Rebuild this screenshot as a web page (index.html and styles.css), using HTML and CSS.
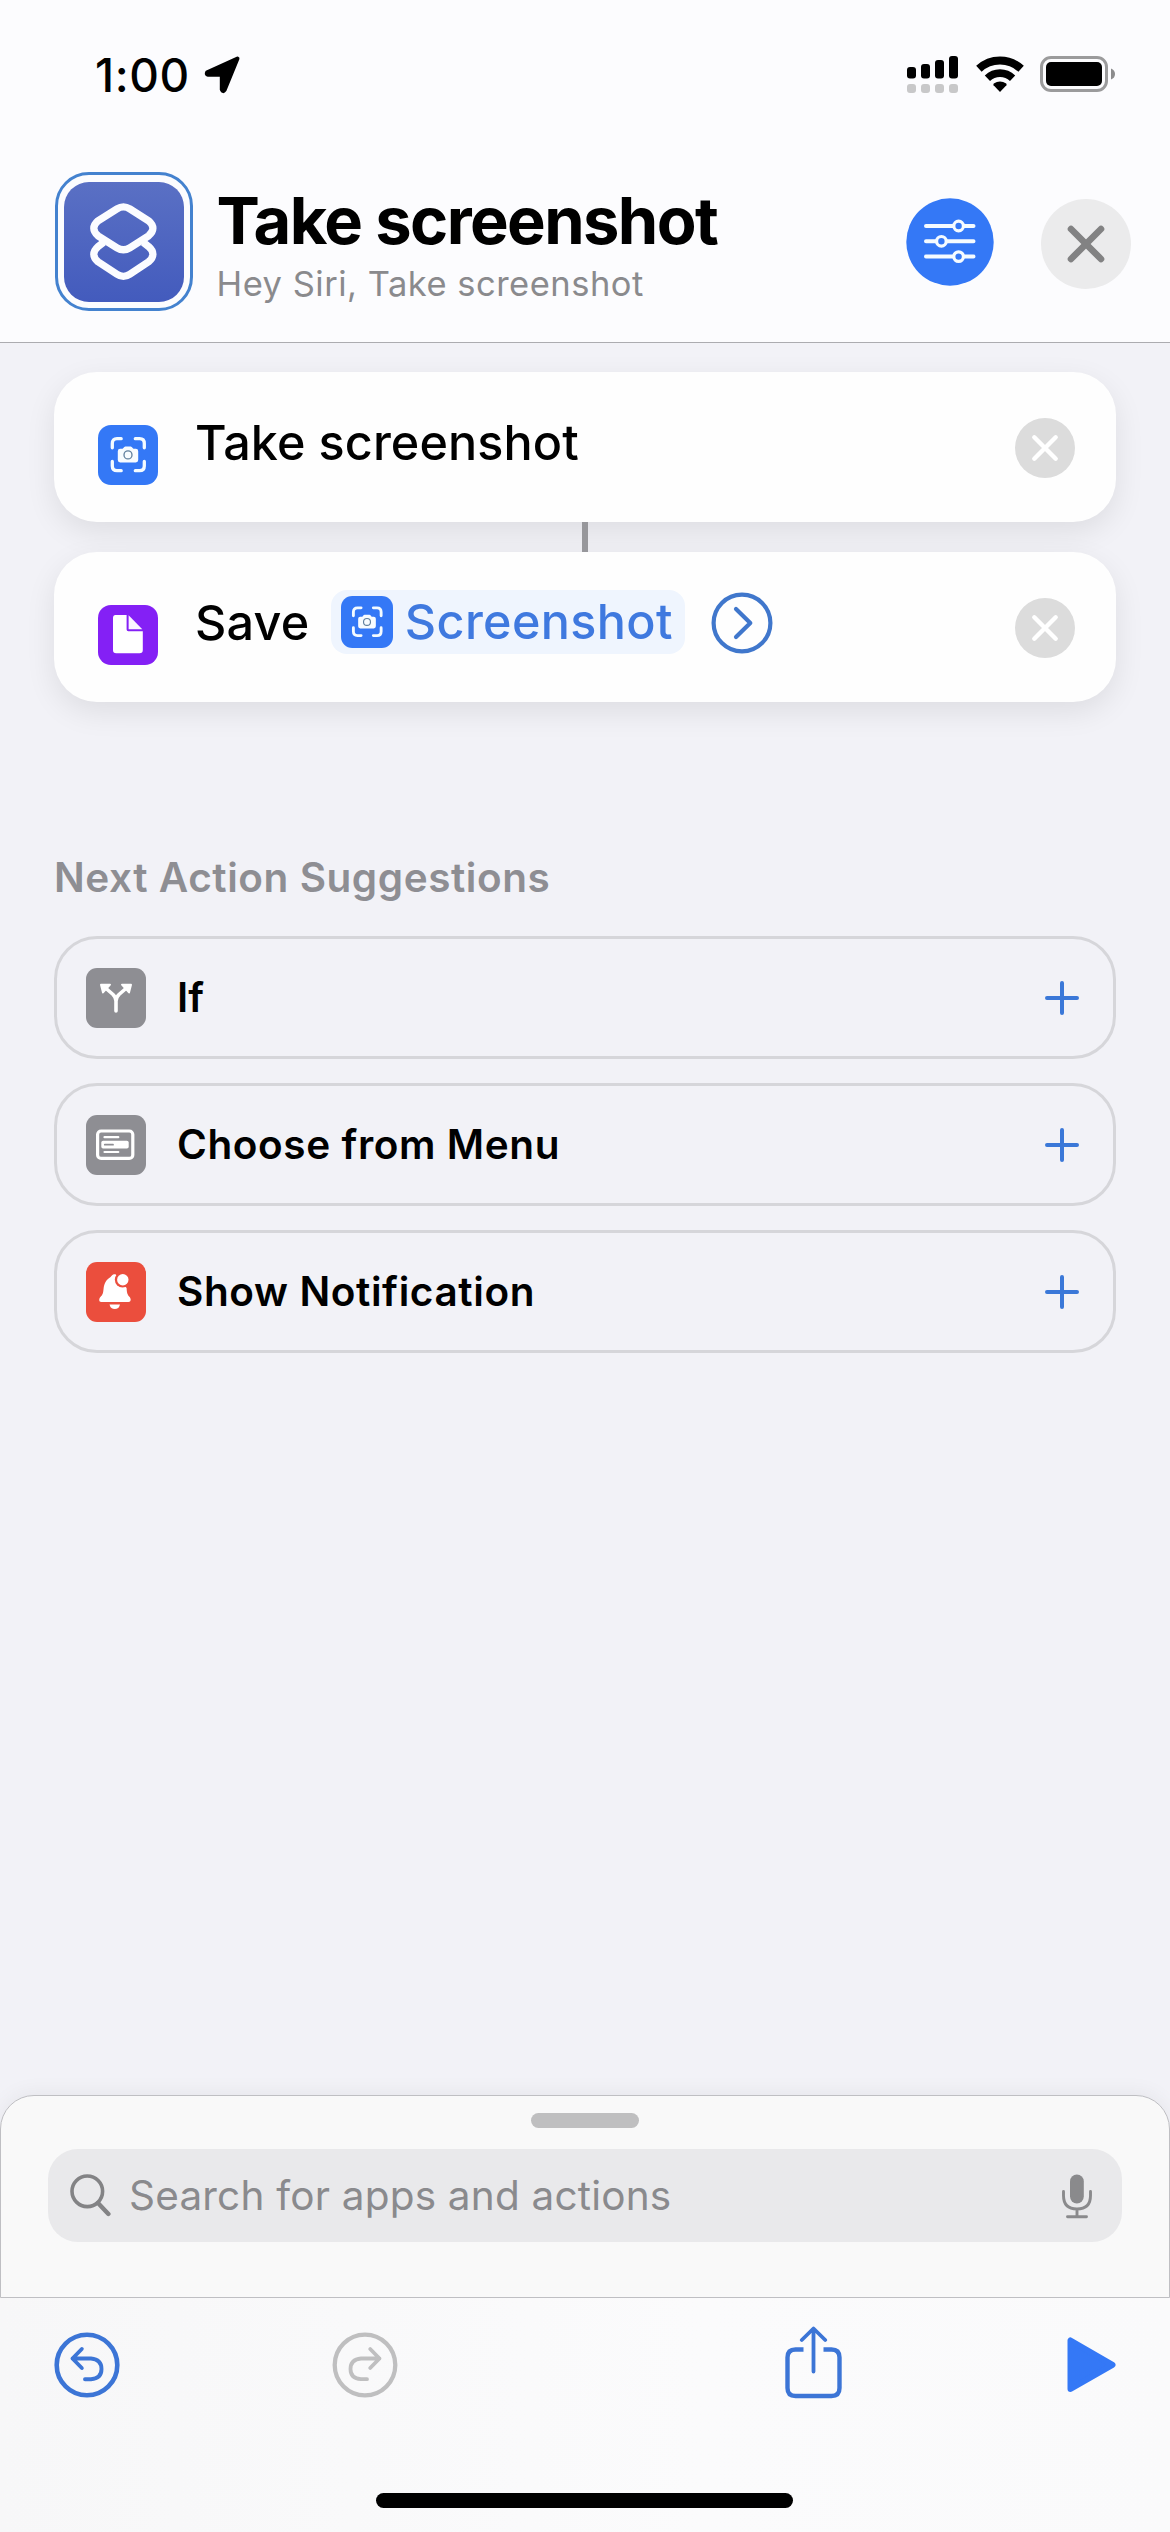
FILE: index.html
```html
<!DOCTYPE html>
<html lang="en">
<head>
<meta charset="utf-8">
<title>Take screenshot</title>
<link rel="stylesheet" href="styles.css">
</head>
<body>
<svg class="defs" width="0" height="0">
  <symbol id="capture" viewBox="0 0 60 60">
    <rect width="60" height="60" rx="13" fill="#3478f6"/>
    <path d="M14.3 22.8V18.5Q14.3 13.7 19 13.7H23.2M37.3 13.7H41.6Q46.3 13.7 46.3 18.5V22.8M46.3 36.5V41Q46.3 45.7 41.6 45.7H37.3M23.2 45.7H19Q14.3 45.7 14.3 41V36.5" fill="none" stroke="#f4fbff" stroke-width="3.3" stroke-linecap="round"/>
    <path d="M22.2 23.8H24.6L26.3 22Q26.6 21.6 27.3 21.6H32.7Q33.4 21.6 33.7 22L35.4 23.8H37.8Q40.2 23.8 40.2 26.2V35Q40.2 37.4 37.8 37.4H22.2Q19.8 37.4 19.8 35V26.2Q19.8 23.8 22.2 23.8Z" fill="#f8fcff"/>
    <circle cx="30" cy="29.9" r="4" fill="none" stroke="#5f7f9d" stroke-width="1.3"/>
  </symbol>
  <symbol id="remove" viewBox="0 0 60 60">
    <circle cx="30" cy="30" r="30" fill="#dcdcdc"/>
    <path d="M19.3 19.3L40.7 40.7M40.7 19.3L19.3 40.7" stroke="#fff" stroke-width="4.4" stroke-linecap="round"/>
  </symbol>
  <symbol id="plus" viewBox="0 0 34 34">
    <path d="M2 17H32M17 2V32" stroke="#3b78d8" stroke-width="4" stroke-linecap="round"/>
  </symbol>
</svg>

<header class="header">
  <div class="status">
    <span class="time">1:00</span>
    <svg class="location" width="37" height="38" viewBox="0 0 37 38"><path d="M33.5 2.5L3.2 16.2Q2 18.5 4 18.8H16.3Q17.8 18.8 17.8 20.3V33.5Q19 36.5 20.6 34Z" fill="#000" stroke="#000" stroke-width="4" stroke-linejoin="round"/></svg>
    <div class="indicators">
      <svg width="52" height="38" viewBox="0 0 52 38">
        <rect x="0" y="11" width="9" height="11.5" rx="3"/><rect x="14" y="8" width="9" height="14.5" rx="3"/><rect x="28" y="4" width="9" height="18.5" rx="3"/><rect x="42" y="0" width="9" height="22.5" rx="3"/>
        <g fill="#c8c8c9"><rect x="0" y="28" width="9" height="9" rx="3"/><rect x="14" y="28" width="9" height="9" rx="3"/><rect x="28" y="28" width="9" height="9" rx="3"/><rect x="42" y="28" width="9" height="9" rx="3"/></g>
      </svg>
      <svg width="48" height="37" viewBox="0 0 48 37">
        <path d="M2.9 12.8A31 31 0 0 1 45.1 12.8" fill="none" stroke="#000" stroke-width="8"/>
        <path d="M11.4 22.2A18.3 18.3 0 0 1 36.6 22.2" fill="none" stroke="#000" stroke-width="7.6"/>
        <path d="M24 36L17.6 29.2Q17 28.4 17.8 27.6Q24 23.2 30.2 27.6Q31 28.4 30.4 29.2Z"/>
      </svg>
      <svg width="76" height="37" viewBox="0 0 76 37">
        <rect x="1.5" y="1.5" width="65" height="33" rx="9.5" fill="none" stroke="#9b9b9c" stroke-width="3"/>
        <rect x="6" y="6" width="56" height="24" rx="5"/>
        <path d="M71 12.5Q75 14 75 18Q75 22 71 23.5Z" fill="#8c8c8d"/>
      </svg>
    </div>
  </div>
  <div class="titlebar">
    <div class="appicon">
      <svg width="120" height="120" viewBox="0 0 120 120" fill="none" stroke="#fbfcff" stroke-width="7.3" stroke-linejoin="round">
        <path d="M53 26.9Q59.4 22.8 65.8 26.9L84.6 38.8Q93.2 46.3 84.6 53.8L65.8 65.8Q59.4 69.8 53 65.8L34 53.8Q25.6 46.3 34 38.8Z"/>
        <path d="M39.5 60.3L34 64.6Q25.6 72.2 34 79.8L53 92.2Q59.4 96.5 65.8 92.2L84.6 79.8Q93.2 72.2 84.6 64.6L79.3 60.3"/>
      </svg>
    </div>
    <div class="titles">
      <h1 class="title">Take screenshot</h1>
      <p class="phrase">Hey Siri, Take screenshot</p>
    </div>
    <svg class="settings" width="88" height="88" viewBox="0 0 88 88">
      <circle cx="44" cy="44" r="43.7" fill="#3478f6"/>
      <g fill="none" stroke="#f5fbff" stroke-width="4" stroke-linecap="round">
        <path d="M20 28H47M58 28H67.5M20 43.3H30M41 43.3H67.5M20 58.6H47M58 58.6H67.5"/>
        <circle cx="52.6" cy="28" r="4.8" stroke-width="3.2"/><circle cx="35.4" cy="43.3" r="4.8" stroke-width="3.2"/><circle cx="52.6" cy="58.6" r="4.8" stroke-width="3.2"/>
      </g>
    </svg>
    <svg class="close" width="90" height="90" viewBox="0 0 90 90">
      <circle cx="45" cy="45" r="45" fill="#ebebec"/>
      <path d="M30 30L60 60M60 30L30 60" stroke="#828283" stroke-width="6.6" stroke-linecap="round"/>
    </svg>
  </div>
</header>

<main class="content">
  <section class="actions">
    <div class="card">
      <svg class="cardicon" width="60" height="60"><use href="#capture"/></svg>
      <span class="cardtext">Take screenshot</span>
      <svg class="remove" width="60" height="60"><use href="#remove"/></svg>
    </div>
    <div class="connector"></div>
    <div class="card">
      <svg class="cardicon" width="60" height="60" viewBox="0 0 60 60">
        <rect width="60" height="60" rx="13" fill="#8420f5"/>
        <path d="M17.5 10H28.6V24.5Q28.6 26.2 30.3 26.2H44.8V45Q44.8 48.2 41.6 48.2H18.2Q15 48.2 15 45V13Q15 10 17.5 10Z" fill="#fff"/>
        <path d="M30.6 10.3L44.3 24.2H30.6Z" fill="#fbf5ff"/>
      </svg>
      <span class="cardtext save">Save</span>
      <span class="pill">
        <svg width="52" height="52"><use href="#capture"/></svg>
        <span class="variable">Screenshot</span>
      </span>
      <svg class="expand" width="62" height="62" viewBox="0 0 62 62" fill="none" stroke="#4077cc" stroke-width="4.2" stroke-linecap="round" stroke-linejoin="round"><circle cx="31" cy="31" r="28.4"/><path d="M25 17L39.3 31L25 45"/></svg>
      <svg class="remove" width="60" height="60"><use href="#remove"/></svg>
    </div>
  </section>

  <section class="suggestions">
    <h2 class="heading">Next Action Suggestions</h2>
    <div class="suggestion">
      <svg width="60" height="60" viewBox="0 0 60 60">
        <rect width="60" height="60" rx="11" fill="#8e8e93"/>
        <path d="M30 43V33Q30 29.5 27 26.5L19.5 20M30 33Q30 29.5 33 26.5L40.5 20" fill="none" stroke="#fff" stroke-width="3.6" stroke-linecap="round"/>
        <path d="M15 16.7L24 16.7L17 24.4ZM45 16.7L36 16.7L43 24.4Z" fill="#fff" stroke="#fff" stroke-width="2" stroke-linejoin="round"/>
      </svg>
      <span class="label short">If</span>
      <svg class="add" width="34" height="34"><use href="#plus"/></svg>
    </div>
    <div class="suggestion">
      <svg width="60" height="60" viewBox="0 0 60 60">
        <rect width="60" height="60" rx="11" fill="#8e8e93"/>
        <rect x="11.6" y="16" width="35.2" height="27.4" rx="3.5" fill="none" stroke="#fff" stroke-width="3.2"/>
        <path d="M18.5 22.2H32.3M18.5 37H32.3" stroke="#fff" stroke-width="2.2" stroke-linecap="round"/>
        <rect x="15.3" y="25.8" width="27.4" height="7.8" rx="1.8" fill="#fff"/>
        <path d="M18.8 29.7H27" stroke="#8e8e93" stroke-width="1.8" stroke-linecap="round"/>
      </svg>
      <span class="label">Choose from Menu</span>
      <svg class="add" width="34" height="34"><use href="#plus"/></svg>
    </div>
    <div class="suggestion">
      <svg width="60" height="60" viewBox="0 0 60 60">
        <rect width="60" height="60" rx="11" fill="#eb4e3d"/>
        <path d="M29.5 12.2C26 12 25.3 14.3 24.6 15C19.5 18 18.2 22 17.6 26.5C17.2 31 16.6 33 14.6 34.8C12.8 36.6 12.6 40 15.2 40H42.5C45.2 40 45.3 36.8 43.4 34.8C41.4 32.5 40.9 31 40.6 26Z" fill="#fff"/>
        <circle cx="36.6" cy="17.8" r="7.8" fill="#eb4e3d"/><circle cx="36.8" cy="17.8" r="5.7" fill="#fff"/>
        <path d="M23.5 42.4H34Q32.8 47 28.8 47Q24.7 47 23.5 42.4Z" fill="#fff"/>
      </svg>
      <span class="label">Show Notification</span>
      <svg class="add" width="34" height="34"><use href="#plus"/></svg>
    </div>
  </section>
</main>

<section class="sheet">
  <div class="handle"></div>
  <div class="search">
    <svg width="41" height="46" viewBox="0 0 41 46" fill="none" stroke="#838385" stroke-linecap="round"><circle cx="17.3" cy="18.3" r="15.3" stroke-width="3.6"/><path d="M28 30L38.4 41" stroke-width="4.4"/></svg>
    <span class="placeholder">Search for apps and actions</span>
    <svg class="mic" width="30" height="46" viewBox="0 0 30 46"><rect x="8" y="1.5" width="13.8" height="29" rx="6.9" fill="#8a8a8c"/><path d="M1.5 18.5V22.5Q1.5 36 15 36Q28.5 36 28.5 22.5V18.5M15 36V43.5M5.5 43.8H24.5" fill="none" stroke="#8a8a8c" stroke-width="2.9" stroke-linecap="round"/></svg>
  </div>
</section>

<footer class="toolbar">
  <svg class="undo" width="66" height="66" viewBox="0 0 66 66" fill="none" stroke="#3c75d6" stroke-linecap="round" stroke-linejoin="round"><circle cx="33" cy="33" r="30.3" stroke-width="4.6"/><path d="M27.8 17L18.5 26.5L27.8 36M18.5 26.5H37Q47.5 27.5 47.5 37Q47.5 46.5 37 47.2H31" stroke-width="3.9"/></svg>
  <svg class="redo" width="66" height="66" viewBox="0 0 66 66" fill="none" stroke="#bfbfc0" stroke-linecap="round" stroke-linejoin="round"><circle cx="33" cy="33" r="30.3" stroke-width="4.3"/><path d="M38.2 17L47.5 26.5L38.2 36M47.5 26.5H29Q18.5 27.5 18.5 37Q18.5 46.5 29 47.2H35" stroke-width="3.8"/></svg>
  <svg class="share" width="58" height="74" viewBox="0 0 58 74" fill="none" stroke="#3c75d6" stroke-linecap="round" stroke-linejoin="round"><path d="M18.5 23.5H10.5Q2.5 23.5 2.5 31.5V62Q2.5 70 10.5 70H46.5Q54.5 70 54.5 62V31.5Q54.5 23.5 46.5 23.5H38.5" stroke-width="4.4" stroke-linecap="butt"/><path d="M28.5 45.5V3M16.8 14L28.5 2.5L40.2 14" stroke-width="3.8"/></svg>
  <svg class="play" width="49" height="56" viewBox="0 0 49 56"><path d="M3.5 3.5V52L45.5 27.8Z" fill="#3478f6" stroke="#3478f6" stroke-width="6" stroke-linejoin="round"/></svg>
  <div class="home"></div>
</footer>
</body>
</html>
```
FILE: styles.css
```css
* { box-sizing: border-box; margin: 0; }

body {
  width: 1170px;
  height: 2532px;
  display: flex;
  flex-direction: column;
  overflow: hidden;
  background: #f2f2f7;
  color: #000;
  font-family: Inter, "Liberation Sans", sans-serif;
}

svg { display: block; flex: none; }
.defs { position: absolute; }

/* Header */
.header {
  height: 343px;
  flex: none;
  background: #fcfcfe;
  border-bottom: 1.5px solid #acacb0;
}
.status {
  height: 149px;
  padding: 0 54px 0 95px;
  display: flex;
  align-items: center;
}
.time { font-size: 46px; line-height: 60px; font-weight: 550; letter-spacing: 0.6px; }
.location { margin-left: 14px; }
.indicators { margin-left: auto; display: flex; align-items: center; gap: 16.5px; }

.titlebar {
  display: flex;
  align-items: flex-start;
  padding: 23px 39px 0 54.5px;
}
.appicon {
  width: 138px;
  height: 139px;
  display: grid;
  place-items: center;
  border: 3px solid #4482cf;
  border-radius: 34px;
}
.appicon svg {
  border-radius: 25px;
  background: linear-gradient(#5a70c4, #435bbd);
}
.titles { margin: 11px 0 0 24px; }
.title { font-size: 65px; line-height: 76px; font-weight: 700; letter-spacing: -1.6px; white-space: nowrap; }
.phrase { font-size: 34.5px; line-height: 50px; letter-spacing: 0.5px; color: #8a8a8d; white-space: nowrap; }
.settings { margin: 25.5px 0 0 auto; }
.close { margin: 27px 0 0 47px; }

/* Shortcut actions */
.content { flex: 1; padding: 29px 54px 0; }
.actions { display: flex; flex-direction: column; }
.card {
  height: 150px;
  display: flex;
  align-items: flex-start;
  padding: 0 41px 0 44px;
  background: #fefefe;
  border-radius: 43px;
  box-shadow: 0 10px 30px rgba(0, 0, 0, 0.085);
}
.cardicon { margin-top: 53px; }
.cardtext {
  margin: 40.5px 0 0 37px;
  font-size: 48.5px;
  line-height: 60px;
  font-weight: 450;
  letter-spacing: 0.1px;
}
.save { letter-spacing: 0.2px; }
.connector { width: 6px; height: 30px; margin: 0 auto; background: #97979b; position: relative; }
.pill {
  height: 64px;
  margin: 38px 0 0 21.5px;
  padding: 0 12px 0 10px;
  display: flex;
  align-items: center;
  gap: 12px;
  border-radius: 16px;
  background: #eff5fe;
}
.variable { font-size: 48.5px; line-height: 60px; font-weight: 480; letter-spacing: 0.35px; color: #3f79df; }
.expand { margin: 39.5px 0 0 26.5px; }
.remove { margin: 46px 0 0 auto; }

/* Suggestions */
.suggestions { display: flex; flex-direction: column; gap: 24px; padding-top: 150.5px; }
.heading {
  margin-bottom: 9.5px;
  font-size: 40.5px;
  line-height: 50px;
  font-weight: 600;
  letter-spacing: 0.55px;
  color: #8e8e93;
}
.suggestion {
  height: 123px;
  display: flex;
  align-items: center;
  padding: 0 34px 0 29px;
  border: 3px solid #d6d6da;
  border-radius: 43px;
}
.label { margin-left: 31px; font-size: 40.5px; line-height: 50px; font-weight: 600; letter-spacing: 0.6px; }
.short { letter-spacing: 0; }
.add { margin-left: auto; }

/* Search sheet */
.sheet {
  height: 203px;
  flex: none;
  border: 1.5px solid #bfbfc3;
  border-radius: 34px 34px 0 0;
  background: #f9f9f9;
  box-shadow: 0 -3px 20px rgba(0, 0, 0, 0.05);
}
.handle { width: 108px; height: 15px; margin: 17px auto 0; border-radius: 8px; background: #bfbfc0; }
.search {
  height: 93px;
  margin: 21px 47px 0;
  padding: 0 30px 0 22px;
  display: flex;
  align-items: center;
  border-radius: 30px;
  background: #e9e9eb;
}
.placeholder { margin-left: 18px; font-size: 40.5px; line-height: 50px; letter-spacing: 0.2px; color: #8a8a8d; }
.mic { margin-left: auto; }

/* Toolbar */
.toolbar {
  height: 234px;
  flex: none;
  display: grid;
  grid-template-columns: 278px 453px 282px 49px;
  grid-template-rows: 133px auto;
  align-items: center;
  padding: 0 53.5px;
  background: linear-gradient(90deg, #f7f7f8, #fbfbfc 60%, #fafafb);
}
.share { margin-bottom: 3px; }
.home {
  grid-column: 1 / -1;
  align-self: start;
  justify-self: center;
  width: 417px;
  height: 15px;
  margin-top: 62px;
  border-radius: 8px;
  background: #000;
}
```
